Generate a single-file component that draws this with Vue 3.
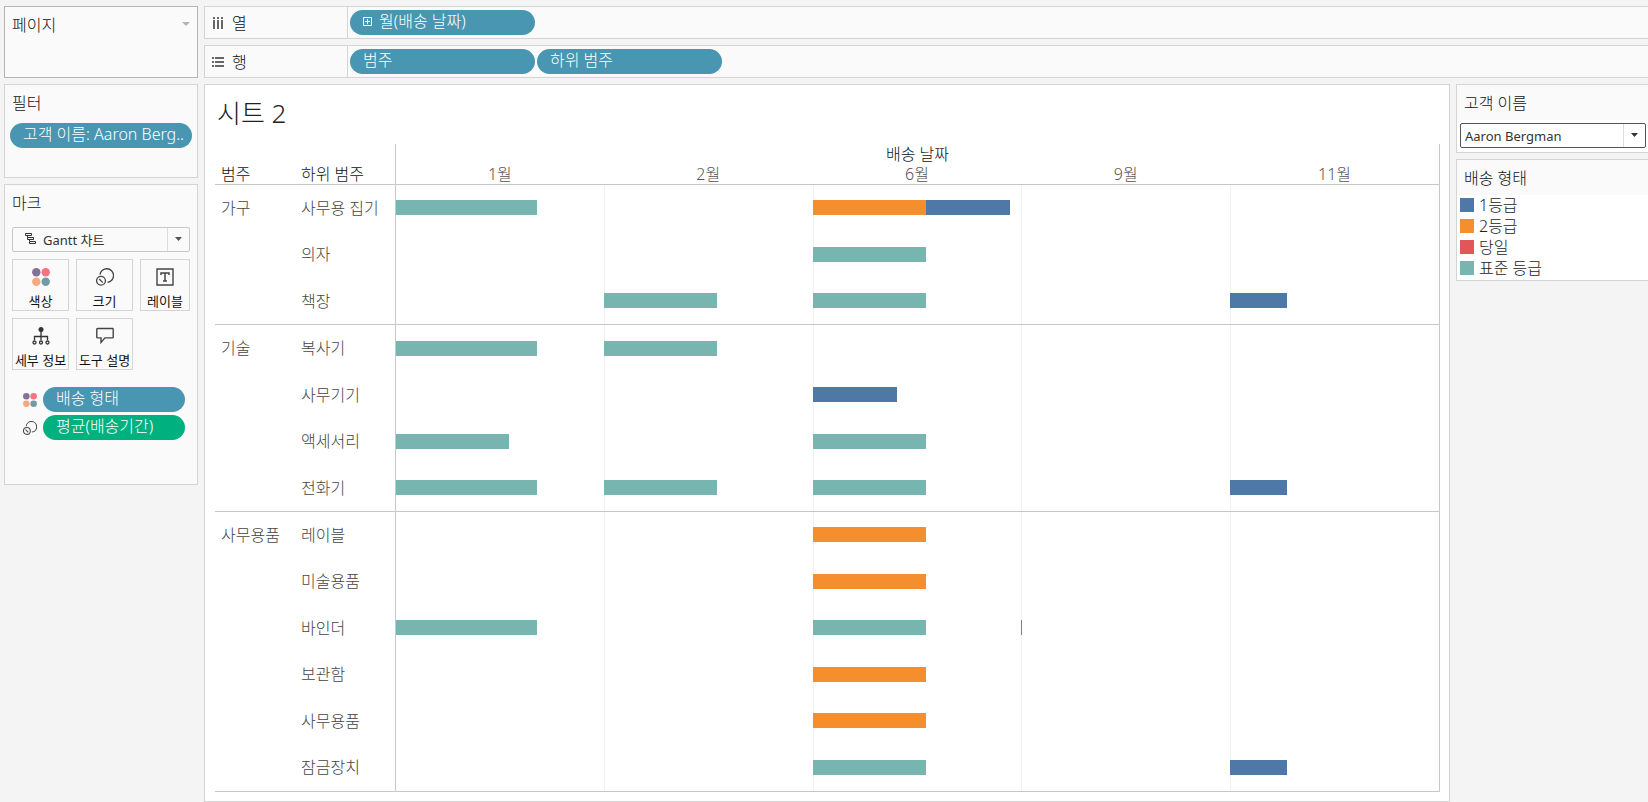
<script setup>
import { ref } from 'vue'

const DAY_SHARE = 13.6

const months = ['1월', '2월', '6월', '9월', '11월']

const groups = [
  {
    name: '가구',
    rows: [
      { name: '사무용 집기', bars: { 0: [['standard', 5]], 2: [['second', 4], ['first', 3]] } },
      { name: '의자', bars: { 2: [['standard', 4]] } },
      { name: '책장', bars: { 1: [['standard', 4]], 2: [['standard', 4]], 4: [['first', 2]] } },
    ],
  },
  {
    name: '기술',
    rows: [
      { name: '복사기', bars: { 0: [['standard', 5]], 1: [['standard', 4]] } },
      { name: '사무기기', bars: { 2: [['first', 3]] } },
      { name: '액세서리', bars: { 0: [['standard', 4]], 2: [['standard', 4]] } },
      { name: '전화기', bars: { 0: [['standard', 5]], 1: [['standard', 4]], 2: [['standard', 4]], 4: [['first', 2]] } },
    ],
  },
  {
    name: '사무용품',
    rows: [
      { name: '레이블', bars: { 2: [['second', 4]] } },
      { name: '미술용품', bars: { 2: [['second', 4]] } },
      { name: '바인더', bars: { 0: [['standard', 5]], 2: [['standard', 4]], 3: [['same', 0]] } },
      { name: '보관함', bars: { 2: [['second', 4]] } },
      { name: '사무용품', bars: { 2: [['second', 4]] } },
      { name: '잠금장치', bars: { 2: [['standard', 4]], 4: [['first', 2]] } },
    ],
  },
]

const legend = [
  { key: 'first', label: '1등급' },
  { key: 'second', label: '2등급' },
  { key: 'same', label: '당일' },
  { key: 'standard', label: '표준 등급' },
]

const markType = ref('Gantt 차트')
const customer = ref('Aaron Bergman')
</script>

<template>
  <div class="workspace">
    <aside class="side">
      <section class="card pages">
        <h2>페이지</h2>
        <button class="menu" aria-label="페이지 메뉴">
          <svg width="8" height="4" viewBox="0 0 8 4"><path d="M0 0h8L4 4z" fill="#b4b4b4" /></svg>
        </button>
      </section>

      <section class="card filters">
        <h2>필터</h2>
        <button class="pill">고객 이름: Aaron Berg..</button>
      </section>

      <section class="card marks">
        <h2>마크</h2>
        <div class="combo mark-type">
          <svg class="lead" width="12" height="12" viewBox="0 0 12 12" fill="none" stroke="#333">
            <path d="M.5 .5h6v2h-6zM2.500 4.500h6v2h-6zM4.500 8.500h6v2h-6zM2.500 2.500v2M4.500 6.500v2" />
          </svg>
          <select v-model="markType" aria-label="마크 유형">
            <option>Gantt 차트</option>
          </select>
          <span class="arrow"><svg width="8" height="5" viewBox="0 0 8 5"><path d="M0 0h7L3.500 4z" fill="#555" /></svg></span>
        </div>

        <div class="buttons">
          <button class="tile">
            <svg width="18" height="18" viewBox="0 0 18 18">
              <circle cx="4.300" cy="4.300" r="4.200" fill="#857099" /><circle cx="13.700" cy="4.300" r="4.200" fill="#f9727f" />
              <circle cx="4.300" cy="13.700" r="4.200" fill="#f5a97f" /><circle cx="13.700" cy="13.700" r="4.200" fill="#709aa5" />
            </svg>
            색상
          </button>
          <button class="tile">
            <svg width="18" height="18" viewBox="0 0 18 18" fill="none" stroke="#444" stroke-width="1.300">
              <path d="M4 6.700A6.800 6.800 0 1 1 11.500 14.300" /><circle cx="5" cy="12.800" r="4.400" /><path d="M3.200 11l3.600 3.600" />
            </svg>
            크기
          </button>
          <button class="tile">
            <svg width="18" height="18" viewBox="0 0 18 18" fill="none" stroke="#444">
              <path d="M1 1h16v16H1z" stroke-width="1.400" />
              <path d="M5 7V5h8v2M9 5v8M7 13h4" stroke-width="1.500" />
            </svg>
            레이블
          </button>
          <button class="tile">
            <svg width="18" height="18" viewBox="0 0 18 18" fill="none" stroke="#333" stroke-width="1.300">
              <circle cx="9" cy="2.500" r="2.500" fill="#333" stroke="none" /><path d="M9 4v9M2.500 13V9.500h13V13" />
              <circle cx="2.500" cy="15.500" r="1.500" /><circle cx="9" cy="15.500" r="1.500" /><circle cx="15.500" cy="15.500" r="1.500" />
            </svg>
            세부 정보
          </button>
          <button class="tile">
            <svg width="18" height="18" viewBox="0 0 18 18" fill="none" stroke="#444" stroke-width="1.400">
              <path d="M1.500 1.500h15q.700 0 .700.700v8q0 .700-.700.700H9L5 15.500V10.900H1.500q-.700 0-.700-.700v-8q0-.700.700-.700z" />
            </svg>
            도구 설명
          </button>
        </div>

        <ul class="encodings">
          <li>
            <svg width="14" height="14" viewBox="0 0 18 18">
              <circle cx="4.300" cy="4.300" r="4.200" fill="#857099" /><circle cx="13.700" cy="4.300" r="4.200" fill="#f9727f" />
              <circle cx="4.300" cy="13.700" r="4.200" fill="#f5a97f" /><circle cx="13.700" cy="13.700" r="4.200" fill="#709aa5" />
            </svg>
            <button class="pill">배송 형태</button>
          </li>
          <li>
            <svg width="14" height="14" viewBox="0 0 18 18" fill="none" stroke="#444" stroke-width="1.300">
              <path d="M4 6.700A6.800 6.800 0 1 1 11.500 14.300" /><circle cx="5" cy="12.800" r="4.400" /><path d="M3.200 11l3.600 3.600" />
            </svg>
            <button class="pill green">평균(배송기간)</button>
          </li>
        </ul>
      </section>
    </aside>

    <div class="main">
      <div class="shelves">
        <section class="shelf">
          <h2>
            <svg width="12" height="12" viewBox="0 0 12 12" fill="#666">
              <path d="M1 0h2v2H1zM5 0h2v2H5zM9 0h2v2H9zM1 3h2v9H1zM5 3h2v9H5zM9 3h2v9H9z" />
            </svg>
            열
          </h2>
          <div class="fields">
            <button class="pill">
              <svg width="9" height="9" viewBox="0 0 9 9" fill="none" stroke="#fff"><path d="M.5 .5h8v8h-8zM4.500 2v5M2 4.500h5" /></svg>
              월(배송 날짜)
            </button>
          </div>
        </section>
        <section class="shelf">
          <h2>
            <svg width="12" height="12" viewBox="0 0 12 12" fill="#666">
              <path d="M0 1h2v2H0zM0 5h2v2H0zM0 9h2v2H0zM3 1h9v2H3zM3 5h9v2H3zM3 9h9v2H3z" />
            </svg>
            행
          </h2>
          <div class="fields">
            <button class="pill">범주</button>
            <button class="pill">하위 범주</button>
          </div>
        </section>
      </div>

      <div class="body">
        <section class="sheet">
          <h1>시트 2</h1>
          <table>
            <thead>
              <tr>
                <th class="dim">범주</th>
                <th class="dim">하위 범주</th>
                <th class="span" colspan="5">배송 날짜</th>
                <th v-for="m in months" :key="m" class="month">{{ m }}</th>
              </tr>
            </thead>
            <tbody v-for="g in groups" :key="g.name" :style="{ flexGrow: g.rows.length }">
              <tr v-for="(r, i) in g.rows" :key="r.name">
                <th class="category">{{ i === 0 ? g.name : '' }}</th>
                <th>{{ r.name }}</th>
                <td v-for="(m, c) in months" :key="m">
                  <span
                    v-for="([kind, days], b) in r.bars[c] || []"
                    :key="b"
                    class="bar"
                    :class="kind"
                    :style="{ width: days * DAY_SHARE + '%' }"
                  ></span>
                </td>
              </tr>
            </tbody>
          </table>
        </section>

        <aside class="right">
          <section class="card">
            <h2><label for="customer">고객 이름</label></h2>
            <div class="control">
              <div class="combo customer">
                <select id="customer" v-model="customer">
                  <option>Aaron Bergman</option>
                </select>
                <span class="arrow"><svg width="8" height="5" viewBox="0 0 8 5"><path d="M0 0h7L3.500 4z" fill="#333" /></svg></span>
              </div>
            </div>
          </section>
          <section class="card">
            <h2>배송 형태</h2>
            <ul class="legend">
              <li v-for="l in legend" :key="l.key"><i :class="l.key"></i>{{ l.label }}</li>
            </ul>
          </section>
        </aside>
      </div>
    </div>
  </div>
</template>

<style>
body {
  margin: 0;
  background: #f4f4f4;
}
</style>

<style scoped>
* {
  box-sizing: border-box;
}

.workspace {
  display: flex;
  gap: 6px;
  min-height: 100vh;
  padding: 6px 0 0 4px;
  overflow: hidden;
  background: #f4f4f4;
  color: #222;
  font: 300 16px/20px "Noto Sans", "Noto Sans CJK KR", sans-serif;
}

h1,
h2,
ul {
  margin: 0;
  padding: 0;
  font-weight: inherit;
  list-style: none;
}

button,
select {
  margin: 0;
  padding: 0;
  border: 0;
  background: none;
  color: inherit;
  font: inherit;
}

h2 {
  color: #111;
  font-size: 16px;
}

.side {
  display: flex;
  flex: 0 0 194px;
  flex-direction: column;
  gap: 6px;
  min-width: 0;
}

.card {
  border: 1px solid #d4d4d4;
  background: #fafafa;
}

.side .card {
  padding: 8px 7px;
}

.side .pages {
  display: flex;
  justify-content: space-between;
  align-items: flex-start;
  min-height: 72px;
  border-color: #b4b4b4;
}

.menu {
  display: flex;
  padding: 7px 0;
}

.side .filters {
  min-height: 94px;
  padding: 8px 5px;
}

.filters h2 {
  padding-left: 2px;
}

.side .marks {
  min-height: 301px;
}

.pill {
  display: flex;
  align-items: center;
  gap: 7px;
  width: 185px;
  height: 25px;
  padding: 0 0 3px 13px;
  border-radius: 13px;
  background: #4996b2;
  color: #fff;
  font-size: 16px;
  white-space: nowrap;
}

.filters .pill {
  width: 100%;
  margin-top: 10px;
}

.pill.green {
  background: #00b180;
}

.combo {
  display: flex;
  position: relative;
  height: 25px;
  border: 1px solid #c8c8c8;
  border-radius: 2px;
  background: #fff;
  font-size: 13px;
  font-weight: 400;
}

.combo select {
  flex: 1;
  min-width: 0;
  padding: 0 26px 0 4px;
  appearance: none;
  outline: 0;
  color: #333;
}

.mark-type {
  margin-top: 14px;
  background: #fafafa;
}

.mark-type select {
  padding-left: 30px;
}

.lead {
  position: absolute;
  top: 5px;
  left: 12px;
}

.arrow {
  display: flex;
  position: absolute;
  top: 0;
  right: 0;
  bottom: 0;
  justify-content: center;
  align-items: center;
  width: 22px;
  border-left: 1px solid #dcdcdc;
  pointer-events: none;
}

.buttons {
  display: grid;
  grid-template-columns: 57px 57px 1fr;
  gap: 7px;
  margin-top: 7px;
}

.tile {
  display: flex;
  flex-direction: column;
  align-items: center;
  gap: 6px;
  height: 52px;
  padding-top: 8px;
  border: 1px solid #d4d4d4;
  color: #111;
  font-size: 13px;
  font-weight: 400;
  line-height: 18px;
  white-space: nowrap;
}

.encodings {
  display: grid;
  gap: 3px;
  margin-top: 17px;
  padding: 0 5px 0 11px;
}

.encodings li {
  display: flex;
  align-items: center;
  gap: 6px;
}

.encodings .pill {
  flex: 1;
  width: auto;
}

.main {
  display: flex;
  flex: 1;
  flex-direction: column;
  gap: 6px;
  min-width: 0;
}

.shelves {
  display: grid;
  gap: 6px;
}

.shelf {
  display: flex;
  height: 33px;
  border: 1px solid #d4d4d4;
  border-right: 0;
  background: #fafafa;
}

.shelf h2 {
  display: flex;
  align-items: center;
  gap: 8px;
  width: 143px;
  padding-left: 7px;
  border-right: 1px solid #d4d4d4;
}

.fields {
  display: flex;
  gap: 2px;
  padding: 3px 2px;
}

.body {
  display: flex;
  flex: 1;
  gap: 6px;
}

.sheet {
  display: flex;
  flex: 1;
  flex-direction: column;
  min-width: 0;
  padding: 12px 9px 9px 10px;
  border: 1px solid #d4d4d4;
  background: #fff;
}

h1 {
  padding-left: 2px;
  font-size: 26px;
  line-height: 32px;
}

table {
  display: flex;
  flex: 1;
  flex-direction: column;
  margin-top: 15px;
  border-right: 1px solid #c8c8c8;
}

thead {
  display: block;
  border-bottom: 1px solid #c8c8c8;
}

tr {
  display: grid;
  grid-template-columns: 80px 100px repeat(5, 1fr);
}

th,
td {
  padding: 0;
}

th {
  font-size: 16px;
  font-weight: 300;
  text-align: left;
  white-space: nowrap;
}

thead tr {
  grid-template-rows: 20px 20px;
  color: #111;
}

.dim {
  grid-row: 2;
  padding-left: 6px;
}

.span {
  grid-row: 1;
  grid-column: 3 / 8;
  border-left: 1px solid #c8c8c8;
  text-align: center;
}

.month {
  grid-row: 2;
  color: #555;
  text-align: center;
}

.span + .month {
  border-left: 1px solid #c8c8c8;
}

tbody {
  display: flex;
  flex: 1 1 0;
  flex-direction: column;
  border-bottom: 1px solid #c8c8c8;
}

tbody tr {
  flex: 1;
  align-items: stretch;
}

tbody th {
  display: flex;
  align-items: center;
  padding: 0 0 1px 6px;
  color: #444;
}

td {
  display: flex;
  align-items: center;
  padding-bottom: 1px;
  border-left: 1px solid #f0f0f0;
}

th + td {
  border-color: #c8c8c8;
}

.bar {
  flex: none;
  min-width: 1px;
  height: 15px;
}

td + td .bar:first-child {
  margin-left: -1px;
}

.first {
  background: #4e79a7;
}

.second {
  background: #f58f2d;
}

.same {
  background: #e15759;
}

.standard {
  background: #78b5b0;
}

.right {
  display: flex;
  flex: 0 0 192px;
  flex-direction: column;
  gap: 6px;
}

.right .card {
  border-right: 0;
  background: #fff;
}

.right h2 {
  padding: 8px 7px 7px;
  background: #fafafa;
}

.control {
  padding: 3px 2px 4px 3px;
}

.customer {
  border-color: #555;
}

.legend {
  padding-bottom: 1px;
}

.legend li {
  display: flex;
  align-items: center;
  gap: 5px;
  height: 21px;
  padding: 0 0 1px 3px;
  font-size: 16px;
}

.legend i {
  width: 14px;
  height: 14px;
}
</style>
